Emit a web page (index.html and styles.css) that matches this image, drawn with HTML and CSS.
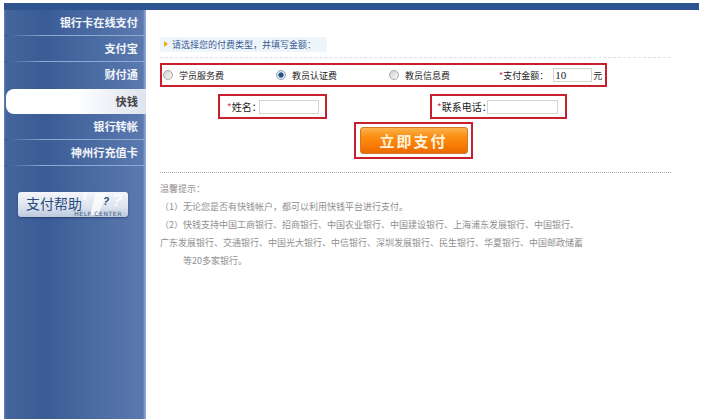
FILE: index.html
```html
<!DOCTYPE html>
<html lang="zh-CN">
<head>
    <meta charset="UTF-8">
    <title>快钱</title>
    <link rel="stylesheet" href="styles.css">
</head>
<body>
    <div class="top-bar"></div>
    <div class="layout">
        <!-- Sidebar -->
        <div class="sidebar">
            <a class="side-item">银行卡在线支付</a>
            <a class="side-item">支付宝</a>
            <a class="side-item">财付通</a>
            <a class="side-item active">快钱</a>
            <a class="side-item">银行转帐</a>
            <a class="side-item">神州行充值卡</a>
            <div class="help-button">
                <span class="help-title">支付帮助</span>
                <svg class="help-deco" width="60" height="25" viewBox="0 0 60 25">
                    <path d="M28 1 L39 1 L30 23 L22 23 Z" fill="#ffffff" opacity="0.75"/>
                    <path d="M15 1 L20 1 L18 8 L15 8 Z" fill="#ffffff" opacity="0.55"/>
                </svg>
                <span class="help-mark">?</span>
                <span class="help-mark-big">?</span>
                <span class="help-sub">HELP CENTER</span>
            </div>
        </div>

        <!-- Main -->
        <div class="main">
            <div class="hint-bar"><span class="hint-arrow"></span>请选择您的付费类型，并填写金额：</div>
            <div class="dash-line"></div>

            <div class="red-box type-row">
                <label class="type-item"><input type="radio" name="fee">学员服务费</label>
                <label class="type-item"><input type="radio" name="fee" checked>教员认证费</label>
                <label class="type-item short"><input type="radio" name="fee">教员信息费</label>
                <span class="amount-label"><em>*</em>支付金额：</span>
                <input class="text-input amount" type="text" value="10">
                <span class="unit">元</span>
            </div>

            <div class="contact-row">
                <div class="red-box name-box">
                    <span class="field-label"><em>*</em>姓名：</span>
                    <input class="text-input name" type="text">
                </div>
                <div class="red-box phone-box">
                    <span class="field-label"><em>*</em>联系电话：</span>
                    <input class="text-input phone" type="text">
                </div>
            </div>

            <div class="red-box pay-box">
                <button class="pay-button">立即支付</button>
            </div>

            <div class="dash-line grey"></div>

            <div class="notes">
                <p>温馨提示：</p>
                <p class="num">（1）无论您是否有快钱帐户，都可以利用快钱平台进行支付。</p>
                <p class="num">（2）快钱支持中国工商银行、招商银行、中国农业银行、中国建设银行、上海浦东发展银行、中国银行、</p>
                <p>广东发展银行、交通银行、中国光大银行、中信银行、深圳发展银行、民生银行、华夏银行、中国邮政储蓄</p>
                <p class="tail">等20多家银行。</p>
            </div>
        </div>
    </div>
</body>
</html>
```

FILE: styles.css
```css
/* Base */
* {
    margin: 0;
    padding: 0;
    box-sizing: border-box;
    font-family: "Noto Sans CJK SC", "Liberation Sans", sans-serif;
}

html, body {
    height: 419px;
    overflow: hidden;
    background: white;
}

.top-bar {
    height: 7px;
    margin: 3px 2px 0 4px;
    background: #2f5590;
}

.layout {
    display: flex;
    height: 409px;
    margin-left: 4px;
}

/* Sidebar */
.sidebar {
    width: 142px;
    flex-shrink: 0;
    background: linear-gradient(to right, #6483b4 0, #44659c 2px, #3a5c96 40px, #5a79af 139px, #8ba6cf 141px, #8ba6cf 142px);
}

.side-item {
    display: block;
    height: 26px;
    padding-right: 8px;
    line-height: 25px;
    text-align: right;
    font-size: 11.2px;
    font-weight: 700;
    color: #f2f5fa;
    border-bottom: 1px solid;
    border-image: linear-gradient(to right, #3a5c96 3px, #8ea9d2 40px) 1;
}

.side-item.active {
    margin-left: 2px;
    height: 25px;
    margin-top: 1px;
    line-height: 24px;
    color: #444;
    border-bottom: none;
    border-radius: 8px 0 0 8px;
    background: linear-gradient(to right, #ffffff 50%, #dde4ee 100%);
}

.side-item:nth-child(3) {
    border-bottom: none;
}

.help-button {
    position: relative;
    width: 110px;
    height: 25px;
    margin: 26px 0 0 14px;
    border-radius: 3px;
    background: linear-gradient(to bottom, #f3f6fa, #dbe3ee 60%, #bcc9dc);
    box-shadow: 0 1px 2px rgba(20,40,80,0.5);
}

.help-title {
    display: block;
    padding: 3px 0 0 8px;
    line-height: 16px;
    font-size: 14px;
    color: #2c4a7c;
}

.help-deco {
    position: absolute;
    top: 0;
    right: 0;
}

.help-mark, .help-mark-big {
    position: absolute;
    font-family: "Liberation Sans", sans-serif;
    font-weight: 700;
    font-style: italic;
}

.help-mark {
    top: 4px;
    left: 85px;
    font-size: 10px;
    color: #2c4a7c;
}

.help-mark-big {
    top: -1px;
    left: 94px;
    font-size: 17px;
    color: #ffffff;
    opacity: 0.8;
}

.help-sub {
    position: absolute;
    right: 6px;
    bottom: 0;
    font-family: "DejaVu Sans", sans-serif;
    font-size: 6px;
    line-height: 6px;
    letter-spacing: 0.6px;
    color: #3d5a88;
}

/* Main */
.main {
    flex: 1;
    padding: 27px 30px 0 14px;
    font-size: 9px;
}

.hint-bar {
    display: flex;
    align-items: center;
    width: 167px;
    height: 15px;
    padding-left: 12px;
    position: relative;
    background: #eef6fc;
    color: #3a5a94;
}

.hint-arrow {
    position: absolute;
    left: 4px;
    top: 4px;
    border-left: 4px solid #f0a818;
    border-top: 3px solid transparent;
    border-bottom: 3px solid transparent;
}

.dash-line {
    margin-top: 5px;
    border-top: 1px dashed #dbe0f0;
}

.dash-line.grey {
    margin-top: 13px;
    border-top: 1px dotted #aaa;
}

.red-box {
    border: 2px solid #c8202e;
    display: flex;
    align-items: center;
    color: #222;
}

.red-box em {
    font-style: normal;
    color: #d8324a;
}

.type-row {
    width: 447px;
    height: 24px;
    margin-top: 5px;
    padding-left: 1px;
}

.type-item {
    display: flex;
    align-items: center;
    width: 113px;
}

.type-item.short {
    width: 110px;
}

.type-item input {
    appearance: none;
    width: 10px;
    height: 10px;
    margin-right: 6px;
    border: 1px solid #a9a9a9;
    border-radius: 50%;
    background: linear-gradient(135deg, #d0d0d0, #f8f8f8);
}

.type-item input:checked {
    background: radial-gradient(circle, #24527f 0, #24527f 2.2px, #dfe8f0 3px);
    border-color: #8fa3b8;
}

.text-input {
    height: 14px;
    border: 1px solid #d4d4d4;
    background: white;
    font-size: 10px;
    color: #222;
    outline: none;
}

.text-input.amount {
    width: 39px;
    margin-left: 5px;
    padding-left: 1px;
    font-family: "Liberation Serif", serif;
    font-size: 11px;
}

.unit {
    margin-left: 1px;
}

.contact-row {
    display: flex;
    gap: 103px;
    margin: 7px 0 0 58px;
}

.name-box, .phone-box {
    height: 25px;
    font-size: 10px;
}

.name-box {
    width: 109px;
    padding-left: 7px;
}

.phone-box {
    width: 137px;
    padding-left: 5px;
}

.field-label {
    white-space: nowrap;
}

.name-box .field-label {
    margin-right: -3px;
}

.phone-box .field-label {
    margin-right: -5px;
}

.text-input.name {
    width: 60px;
}

.text-input.phone {
    width: 71px;
}

.pay-box {
    width: 119px;
    height: 37px;
    margin: 3px 0 0 194px;
    justify-content: center;
}

.pay-button {
    width: 108px;
    height: 27px;
    border: 1px solid #d27a22;
    border-radius: 3px;
    background: linear-gradient(to bottom, #fbb24e 0, #fb8f12 35%, #f97c06 70%, #ea6a00 100%);
    color: #fdf3dc;
    font-size: 15px;
    font-weight: 700;
    letter-spacing: 2px;
}

/* Notes */
.notes {
    margin-top: 7px;
    color: #8f8f8f;
    line-height: 18px;
}

.notes p {
    white-space: nowrap;
}

.notes .tail {
    padding-left: 23px;
}
```
